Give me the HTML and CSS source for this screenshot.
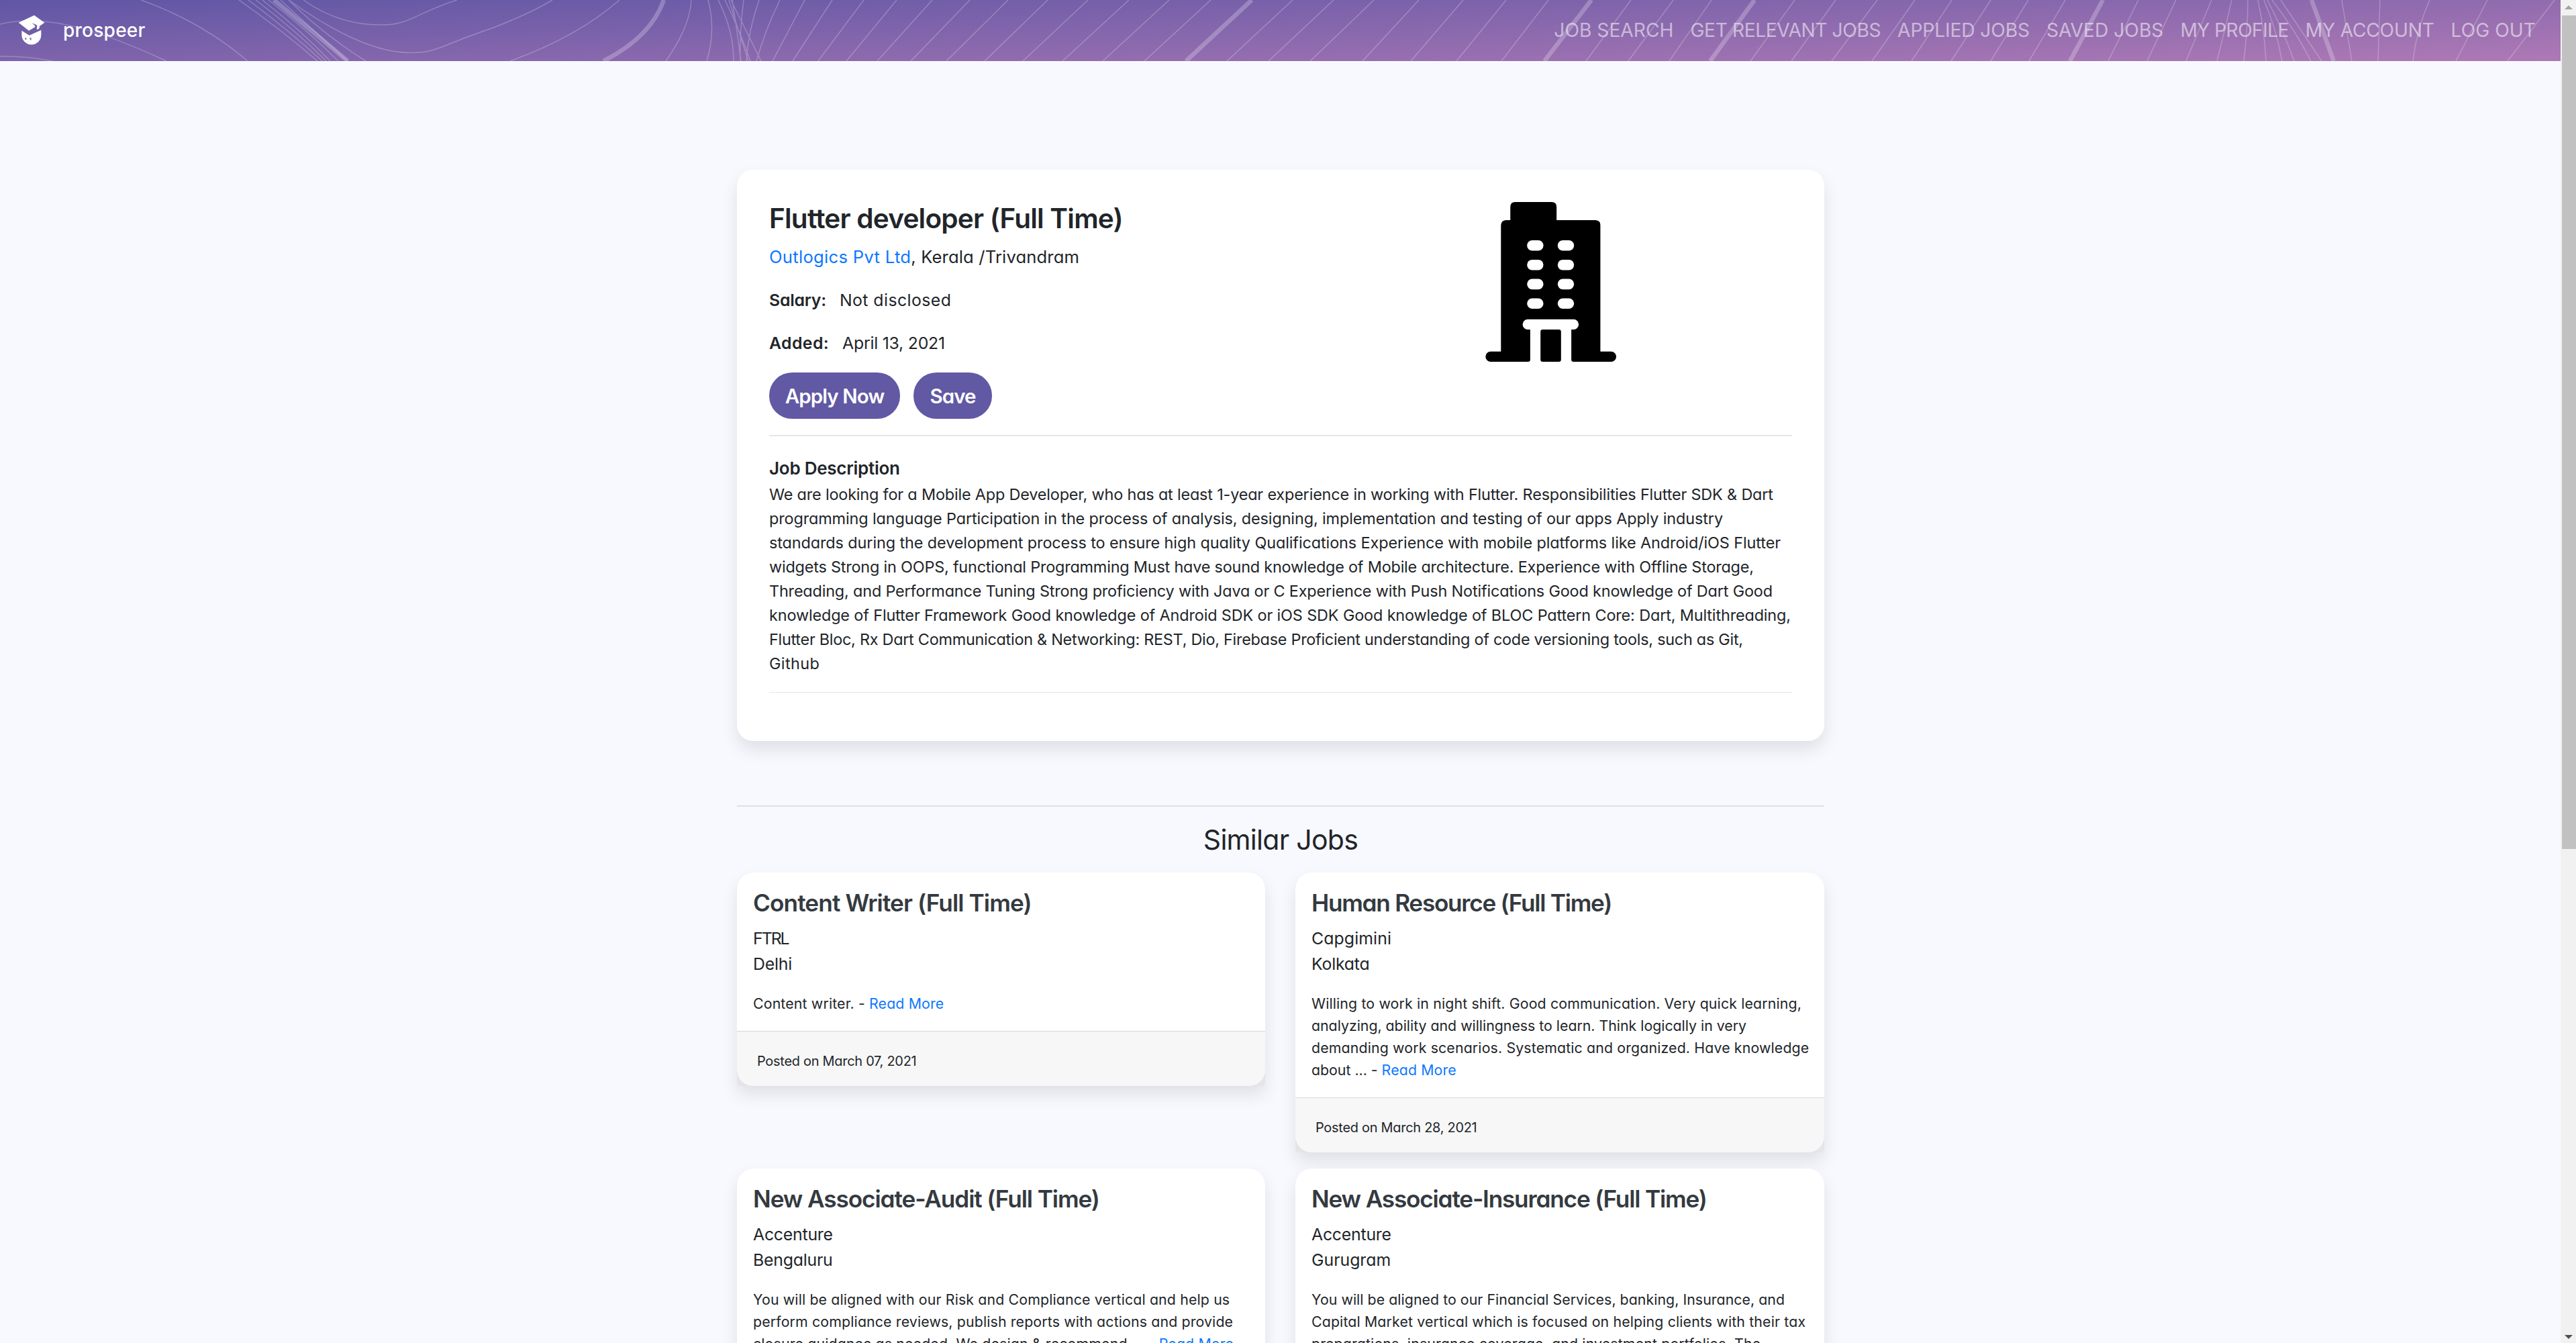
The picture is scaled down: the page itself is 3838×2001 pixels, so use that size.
FILE: index.html
```html
<!DOCTYPE html>
<html lang="en">
<head>
<meta charset="utf-8">
<title>prospeer</title>
<link rel="stylesheet" href="styles.css">
</head>
<body>
<div class="page">
<header class="navbar">
  <svg class="navbar-lines" viewBox="0 0 3815 91" aria-hidden="true">
    <path class="thin" d="M0 36C60 22 130 36 248 91M0 84Q40 83 78 91M210 0Q300 32 369 91M356 0Q420 45 473 91M370 0Q430 45 480 91M381 0Q440 45 486 91M391 0Q448 45 492 91M400 0Q458 45 504 91M418 0Q470 48 518 91M430 0Q480 50 545 91M452 0C490 27 530 38 571 37C610 37 625 17 681 0M430 0C500 50 560 78 609 78.500C650 80 660 66 733 42Q790 20 823 0M923 0Q860 55 760 91M1030 0Q1028 40 992 91M1055 0Q1067 45 1053 91M1070 0Q1093 45 1093 91M1080 0Q1102 45 1118 91M1086 0Q1100 45 1115 91M1091 0Q1098 45 1104 91M1089 0L1134 91M1108 0Q1102 45 1103 91M1131 0Q1115 45 1112 91M1162 0Q1140 45 1127 91M1199 0L1151 91M1240 0L1181 91M1287 0L1219 91M1336 0L1261 91M1389 0L1307 91M1445 0L1357 91M1502 0L1410 91M1561 0L1467 91M1621 0L1524 91M1682 0L1583 91M1742 0L1643 91M1804 0L1705 91M1926 0L1828 91M1987 0L1890 91M2047 0L1952 91M2114 0L2030 91M2180 0L2102 91M2244 0L2170 91M2307 0L2237 91M2430 0L2363 91M2493 0L2426 91M2550 0L2487 91M2674 0L2608 91M2735 0L2669 91M2797 0L2729 91M2853 0L2789 91M2908 0L2848 91M2966 0L2907 91M3022 0L2966 91M3077 0L3023 91M3186 0L3141 91M3242 0L3199 91M3295 0L3257 91M3325 0Q3315 45 3303 91M3349 0Q3349 45 3343 91M3364 0Q3374 45 3376 91M3373 0Q3392 45 3400 91M3378 0Q3402 45 3418 91M3385 0Q3420 45 3443 91M3398 0L3459 91M3489 0L3504 91M3546 0L3543 91M3620 0Q3600 45 3595 91M3706 0L3659 91M3806 0L3736 91"/>
    <path class="thick" d="M408 0Q466 47 518 91M989 0Q970 55 899 91M1865 0L1767 91M2371 0L2301 91M2614 0L2548 91M3133 0L3084 91M3444 0L3477 91"/>
  </svg>
  <a class="brand">
    <svg class="brand-logo" viewBox="50 35 120 135" aria-hidden="true">
      <path d="M122 37L168 70L146 86L145 94L138 102L133 97L135 84L130 79L112 72L125 83L126 90L98 106L52 70Z"/>
      <path fill-rule="evenodd" d="M66 106L100 127L153 103V125A43.500 43.500 0 0 1 66 125ZM80 139Q82 148 87 147L86 137ZM102 137Q102 149 108 149L109 139Z"/>
    </svg>
    <span class="brand-name">prospeer</span>
  </a>
  <nav class="nav">
    <a>JOB SEARCH</a><a class="nav-relevant">GET RELEVANT JOBS</a><a class="nav-applied">APPLIED JOBS</a><a>SAVED JOBS</a><a class="nav-profile">MY PROFILE</a><a class="nav-account">MY ACCOUNT</a><a>LOG OUT</a>
  </nav>
</header>
<main class="content">
  <article class="job">
    <div class="job-head">
      <div>
        <h1 class="job-title">Flutter developer (Full Time)</h1>
        <p class="job-line company"><a class="link">Outlogics Pvt Ltd</a><span class="place">, Kerala /Trivandram</span></p>
        <p class="job-line"><b class="salary-label">Salary:</b><span class="salary">Not disclosed</span></p>
        <p class="job-line"><b class="added-label">Added:</b><span class="added">April 13, 2021</span></p>
        <div class="actions"><button class="btn apply">Apply Now</button><button class="btn save">Save</button></div>
      </div>
      <svg class="building" viewBox="99 93 584 715" aria-hidden="true">
        <path d="M210 174V115Q210 93 232 93H395Q417 93 417 115V174H592Q613 176 613 195V762H661A23 23 0 0 1 661 808H493Q483 808 483 798V664H493A23 23 0 0 0 493 618H288A23 23 0 0 0 288 664H299V798Q299 808 289 808H122A23 23 0 0 1 122 762H168V195Q170 176 189 174Z"/>
        <rect x="345" y="664" width="92" height="144" rx="10"/>
        <g class="pane"><rect x="285" y="264" width="73" height="47" rx="23"/><rect x="422" y="264" width="73" height="47" rx="23"/><rect x="285" y="351" width="73" height="47" rx="23"/><rect x="422" y="351" width="73" height="47" rx="23"/><rect x="285" y="437" width="73" height="47" rx="23"/><rect x="422" y="437" width="73" height="47" rx="23"/><rect x="285" y="524" width="73" height="47" rx="23"/><rect x="422" y="524" width="73" height="47" rx="23"/></g>
      </svg>
    </div>
    <hr class="rule">
    <h2 class="desc-title">Job Description</h2>
    <p class="desc">
      <span class="d1">We are looking for a Mobile App Developer, who has at least 1-year experience in working with Flutter. Responsibilities Flutter SDK &amp; Dart</span><br>
      <span class="d2">programming language Participation in the process of analysis, designing, implementation and testing of our apps Apply industry</span><br>
      <span class="d3">standards during the development process to ensure high quality Qualifications Experience with mobile platforms like Android/iOS Flutter</span><br>
      <span class="d4">widgets Strong in OOPS, functional Programming Must have sound knowledge of Mobile architecture. Experience with Offline Storage,</span><br>
      <span class="d5">Threading, and Performance Tuning Strong proficiency with Java or C Experience with Push Notifications Good knowledge of Dart Good</span><br>
      <span class="d6">knowledge of Flutter Framework Good knowledge of Android SDK or iOS SDK Good knowledge of BLOC Pattern Core: Dart, Multithreading,</span><br>
      <span class="d7">Flutter Bloc, Rx Dart Communication &amp; Networking: REST, Dio, Firebase Proficient understanding of code versioning tools, such as Git,</span><br>
      <span class="d8">Github</span>
    </p>
    <hr class="rule rule-fine">
  </article>
  <hr class="rule section-rule">
  <h2 class="similar-title">Similar Jobs</h2>
  <section class="cards">
    <article class="card">
      <div class="card-body">
        <h3 class="card-title title-writer">Content Writer (Full Time)</h3>
        <p class="card-meta"><span class="ftrl">FTRL</span><br><span class="tight">Delhi</span></p>
        <p class="card-text">Content writer. - <a class="link">Read More</a></p>
      </div>
      <footer class="card-footer">Posted on March 07, 2021</footer>
    </article>
    <article class="card">
      <div class="card-body">
        <h3 class="card-title title-hr">Human Resource (Full Time)</h3>
        <p class="card-meta"><span class="loose">Capgimini</span><br><span class="tight">Kolkata</span></p>
        <p class="card-text">Willing to work in night shift. Good communication. Very quick learning,<br><span class="even">analyzing, ability and willingness to learn. Think logically in very</span><br>demanding work scenarios. Systematic and organized. Have knowledge<br><span class="even">about ... - </span><a class="link">Read More</a></p>
      </div>
      <footer class="card-footer">Posted on March 28, 2021</footer>
    </article>
    <article class="card">
      <div class="card-body">
        <h3 class="card-title title-audit">New Associate-Audit (Full Time)</h3>
        <p class="card-meta"><span class="tight">Accenture</span><br><span class="tight">Bengaluru</span></p>
        <p class="card-text">You will be aligned with our Risk and Compliance vertical and help us<br>perform compliance reviews, publish reports with actions and provide<br>closure guidance as needed. We design &amp; recommend ... - <a class="link">Read More</a></p>
      </div>
    </article>
    <article class="card">
      <div class="card-body">
        <h3 class="card-title title-insurance">New Associate-Insurance (Full Time)</h3>
        <p class="card-meta"><span class="tight">Accenture</span><br>Gurugram</p>
        <p class="card-text"><span class="close">You will be aligned to our Financial Services, banking, Insurance, and</span><br>Capital Market vertical which is focused on helping clients with their tax<br>preparations, insurance coverage, and investment portfolios. The</p>
      </div>
    </article>
  </section>
</main>
</div>
<aside class="scrollbar"><i class="arrow up"></i><i class="thumb"></i><i class="arrow down"></i></aside>
</body>
</html>
```
FILE: styles.css
```css
*{box-sizing:border-box;margin:0;padding:0}
body{display:flex;height:2001px;overflow:hidden;background:#f8f9ff;color:#212529;font-family:Inter,"Noto Sans",sans-serif;font-feature-settings:"cv11";white-space:nowrap}
.page{width:3815px;height:2001px;overflow:hidden}
.link{color:#0d78ff}

/* Navigation bar */
.navbar{position:relative;display:flex;align-items:center;justify-content:space-between;height:91px;padding:0 37px 2px 27px;background:linear-gradient(177.800deg,#6056a5,#ae79b5)}
.navbar-lines{position:absolute;left:0;top:0;width:3815px;height:91px;fill:none;stroke:#fff;stroke-opacity:.24}
.thin{stroke-width:1.500}
.thick{stroke-width:6.500}
.brand,.nav{position:relative;display:flex;align-items:center}
.brand{gap:27px;color:#fff}
.brand-logo{width:40px;height:45px;fill:#fff}
.brand-name{font-size:28px;font-weight:500;letter-spacing:.25px}
.nav{gap:25px;font-size:28.200px;color:rgba(255,255,255,.54)}
.nav-relevant{letter-spacing:-.410px}
.nav-applied{letter-spacing:-.120px}
.nav-profile{letter-spacing:-.590px}
.nav-account{letter-spacing:-.240px}

/* Job details */
.content{width:1620px;margin:162px auto 0 1098px}
.job{height:851px;padding:48px 48px 0;border-radius:24px;background:#fff;box-shadow:0 13px 26px rgba(0,0,0,.1)}
.job-head{display:grid;grid-template-columns:804px 1fr;justify-items:start}
.building{width:195px;height:238px;justify-self:center}
.pane{fill:#fff}
.job-title{font-size:40.500px;line-height:50px;font-weight:600;letter-spacing:-.770px}
.job-line{display:flex;gap:20px;margin-top:26px;font-size:24.800px;line-height:38px}
.company{gap:0;margin-top:13px;font-size:25.600px;letter-spacing:.300px}
.place{letter-spacing:.150px}
.job-line b{font-weight:600}
.salary-label{letter-spacing:-.200px}
.salary{letter-spacing:.443px}
.added-label{letter-spacing:.400px}
.added{letter-spacing:-.226px}
.actions{display:flex;gap:20px;margin-top:25px}
.btn{height:69px;border:0;border-radius:34px;background:#6159a4;color:#fff;font:600 29.500px/70px Inter,sans-serif;font-feature-settings:"cv11";letter-spacing:-.900px}
.apply{width:195px}
.save{width:117px}
.rule{height:2px;margin-top:24px;border:0;background:#e6e6e6}
.desc-title{margin-top:29px;font-size:26px;line-height:38px;font-weight:600;letter-spacing:-.257px}
.desc{margin-top:2px;font-size:23.400px;line-height:36px}
.d1{letter-spacing:-.159px}
.d2{letter-spacing:-.102px}
.d3{letter-spacing:-.086px}
.d4{letter-spacing:-.188px}
.d5{letter-spacing:-.157px}
.d6{letter-spacing:-.127px}
.d7{letter-spacing:-.258px}
.d8{letter-spacing:.400px}
.rule-fine{height:1px}
.section-rule{margin-top:96px;background:#dfe0e6}

/* Similar jobs */
.similar-title{margin:24px 0;text-align:center;font-size:41px;line-height:50px;font-weight:400;letter-spacing:-.700px}
.cards{display:grid;grid-template-columns:787px 788px;gap:24px 45px;align-items:start}
.card{border-radius:24px 24px 5px 5px;background:#e4e4e9;box-shadow:0 13px 26px rgba(0,0,0,.1)}
.card-body{padding:24px;border-radius:24px 24px 0 0;background:#fff}
.card-title{font-size:35.200px;line-height:42px;font-weight:600;color:#343a40}
.title-writer{letter-spacing:-.900px}
.title-hr{letter-spacing:-1.280px}
.title-audit{letter-spacing:-1.090px}
.title-insurance{letter-spacing:-1.190px}
.card-meta{margin-top:13px;font-size:24.800px;line-height:38px}
.ftrl{letter-spacing:-2px}
.tight{letter-spacing:-.210px}
.loose{letter-spacing:.110px}
.card-text{margin-top:24px;font-size:21.300px;line-height:33px;letter-spacing:.150px}
.card-text .even{letter-spacing:0}
.card-text .close{letter-spacing:.060px}
.card-footer{height:82px;padding:29px 30px 0;border-top:1px solid #d9d9d9;border-radius:0 0 24px 24px;background:#f7f7f7;font-size:19.900px;line-height:30px;letter-spacing:-.240px}

/* Page scrollbar */
.scrollbar{display:flex;flex-direction:column;align-items:flex-end;width:23px;height:2001px;background:#f1f1f1}
.arrow{width:0;height:0;margin:0 5px;border:6px solid transparent}
.up{margin-top:2px;border-bottom-color:#a3a3a3}
.down{margin:724px 5px 0;border-top-color:#505050}
.thumb{width:21px;height:1244px;margin-top:9px;background:#c1c1c1}
```
